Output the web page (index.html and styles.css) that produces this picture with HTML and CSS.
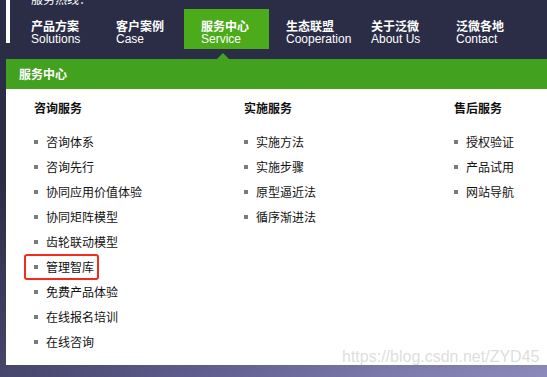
FILE: index.html
```html
<!DOCTYPE html>
<html lang="zh">
<head>
<meta charset="utf-8">
<title>服务中心</title>
<link rel="stylesheet" href="styles.css">
</head>
<body>
<header class="header">
  <div class="side-bar"></div>
  <div class="header-main">
    <div class="hotline"><span>服务热线：</span></div>
    <nav class="nav">
      <a class="nav-item"><span class="cn">产品方案</span><span class="en">Solutions</span></a>
      <a class="nav-item"><span class="cn">客户案例</span><span class="en">Case</span></a>
      <a class="nav-item active"><span class="cn">服务中心</span><span class="en">Service</span></a>
      <a class="nav-item"><span class="cn">生态联盟</span><span class="en">Cooperation</span></a>
      <a class="nav-item"><span class="cn">关于泛微</span><span class="en">About Us</span></a>
      <a class="nav-item"><span class="cn">泛微各地</span><span class="en">Contact</span></a>
    </nav>
  </div>
</header>

<section class="panel">
  <span class="arrow"></span>
  <div class="panel-title">服务中心</div>
  <div class="panel-body">
    <div class="col">
      <h3 class="col-title">咨询服务</h3>
      <ul class="list">
        <li>咨询体系</li>
        <li>咨询先行</li>
        <li>协同应用价值体验</li>
        <li>协同矩阵模型</li>
        <li>齿轮联动模型</li>
        <li class="marked">管理智库</li>
        <li>免费产品体验</li>
        <li>在线报名培训</li>
        <li>在线咨询</li>
      </ul>
    </div>
    <div class="col">
      <h3 class="col-title">实施服务</h3>
      <ul class="list">
        <li>实施方法</li>
        <li>实施步骤</li>
        <li>原型逼近法</li>
        <li>循序渐进法</li>
      </ul>
    </div>
    <div class="col">
      <h3 class="col-title">售后服务</h3>
      <ul class="list">
        <li>授权验证</li>
        <li>产品试用</li>
        <li>网站导航</li>
      </ul>
    </div>
  </div>
</section>

<div class="watermark">https://blog.csdn.net/ZYD45</div>
</body>
</html>
```

FILE: styles.css
```css
html, body {
  margin: 0;
  padding: 0;
}

body {
  width: 547px;
  height: 377px;
  overflow: hidden;
  position: relative;
  font-family: "Noto Sans CJK SC", "Liberation Sans", sans-serif;
  font-size: 12px;
  background:
    linear-gradient(to bottom, #2b2d46 0px, #2b2d46 180px, rgba(43,45,70,0) 372px),
    linear-gradient(to right, #46456b 0%, #5d5c8c 35%, #7b79aa 70%, #8b89b9 100%);
}

.header {
  display: flex;
  height: 49px;
}

.side-bar {
  margin-left: 6px;
  width: 4px;
  height: 43px;
  background: #ffffff;
}

.header-main {
  margin-left: 4px;
  display: flex;
  flex-direction: column;
}

.hotline {
  height: 9px;
  overflow: hidden;
  padding-left: 17px;
  color: #ffffff;
}

.hotline span {
  display: block;
  margin-top: -7px;
  line-height: 12px;
  font-size: 12px;
}

.nav {
  display: flex;
}

.nav-item {
  display: flex;
  flex-direction: column;
  width: 85px;
  height: 40px;
  box-sizing: border-box;
  padding: 10px 0 0 17px;
  color: #ffffff;
}

.nav-item.active {
  background: #4cab1b;
}

.nav-item .cn {
  font-weight: bold;
  font-size: 12px;
  line-height: 13px;
  font-family: "Noto Sans CJK SC", sans-serif;
}

.nav-item .en {
  margin-top: 1px;
  font-family: "Liberation Sans", Arial, sans-serif;
  font-size: 12px;
  line-height: 13px;
}

.panel {
  position: relative;
  margin: 10px 0 0 6px;
  width: 541px;
}

.arrow {
  position: absolute;
  left: 211px;
  top: -6px;
  width: 0;
  height: 0;
  border-left: 6px solid transparent;
  border-right: 6px solid transparent;
  border-bottom: 6px solid #43a31f;
}

.panel-title {
  height: 30px;
  line-height: 30px;
  padding-left: 13px;
  background: #42a11f;
  color: #ffffff;
  font-weight: bold;
  font-size: 12px;
}

.panel-body {
  display: grid;
  grid-template-columns: 210px 210px 1fr;
  height: 276px;
  box-sizing: border-box;
  padding: 13px 0 0 28px;
  background: #ffffff;
}

.col-title {
  margin: 0 0 15px 0;
  font-size: 12px;
  line-height: 12px;
  font-weight: bold;
  color: #111111;
}

.list {
  list-style: none;
  margin: 0;
  padding: 0;
}

.list li {
  position: relative;
  display: flex;
  align-items: center;
  height: 25px;
  line-height: 25px;
  color: #111111;
  font-size: 12px;
}

.list li::before {
  content: "";
  width: 4px;
  height: 4px;
  margin-right: 8px;
  background: #7a7a7a;
  flex: none;
}

.list li.marked::after {
  content: "";
  position: absolute;
  left: -10px;
  top: 0;
  width: 75px;
  height: 26px;
  box-sizing: border-box;
  border: 2px solid #f42b1c;
  border-radius: 3px;
}

.watermark {
  position: absolute;
  left: 342px;
  top: 348px;
  font-family: "Liberation Sans", Arial, sans-serif;
  font-size: 16px;
  line-height: 18px;
  color: rgba(215, 215, 215, 0.85);
  white-space: nowrap;
}
```
